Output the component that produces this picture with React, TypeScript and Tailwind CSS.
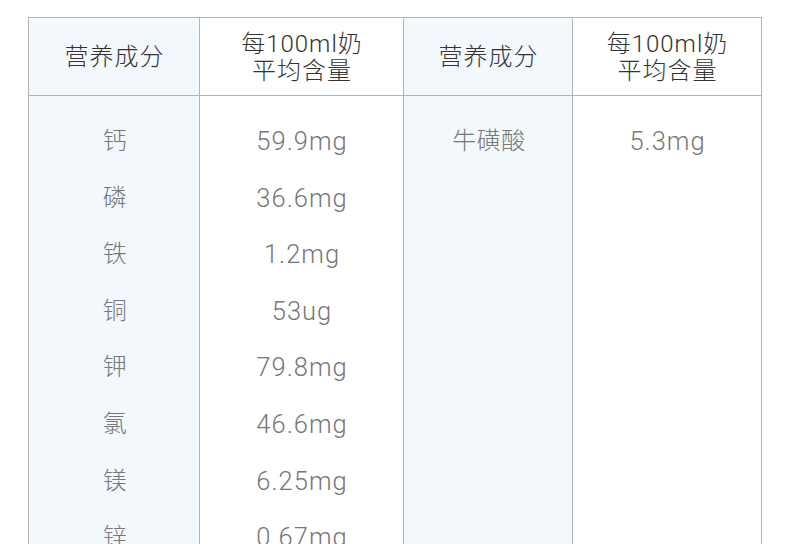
const left = ["钙", "磷", "铁", "铜", "钾", "氯", "镁", "锌"];
const leftVals = ["59.9mg", "36.6mg", "1.2mg", "53ug", "79.8mg", "46.6mg", "6.25mg", "0.67mg"];

function HeaderCell({ children, tinted, last }: { children: React.ReactNode; tinted?: boolean; last?: boolean }) {
  return (
    <div
      className={`h-[78px] pt-[2px] pl-[1px] border-b border-[#b4b4b4] flex items-center justify-center text-center text-[24px] leading-[27px] tracking-[1px] text-[#333] ${tinted ? "bg-[#f3f8fd]" : "bg-white"} ${last ? "" : "border-r"}`}
    >
      {children}
    </div>
  );
}

function BodyCell({ items, tinted, last, numeric }: { items: string[]; tinted?: boolean; last?: boolean; numeric?: boolean }) {
  return (
    <div className={`pt-[17px] pb-6 flex flex-col items-center text-[#777] ${numeric ? "text-[25.5px] tracking-[1px] pl-[1px]" : "text-[24px] tracking-[0.5px] pl-[2px]"} ${tinted ? "bg-[#f3f8fd]" : "bg-white"} ${last ? "" : "border-r border-[#b4b4b4]"}`}>
      {items.map((t) => (
        <div key={t} className="h-[56.6px] leading-[56.6px]">
          {t}
        </div>
      ))}
    </div>
  );
}

export default function App() {
  return (
    <div
      className="w-[790px] h-[544px] overflow-hidden bg-white pt-[17px] pl-[28px]"
      style={{ fontFamily: 'Roboto, "Noto Sans CJK SC", sans-serif', fontWeight: 300 }}
    >
      <div className="w-[734px] border border-[#b4b4b4] grid grid-cols-[171px_204px_169px_188px]">
        <HeaderCell tinted>营养成分</HeaderCell>
        <HeaderCell>
          每100ml奶
          <br />
          平均含量
        </HeaderCell>
        <HeaderCell tinted>营养成分</HeaderCell>
        <HeaderCell last>
          每100ml奶
          <br />
          平均含量
        </HeaderCell>

        <BodyCell items={left} tinted />
        <BodyCell items={leftVals} numeric />
        <BodyCell items={["牛磺酸"]} tinted />
        <BodyCell items={["5.3mg"]} last numeric />
      </div>
    </div>
  );
}
